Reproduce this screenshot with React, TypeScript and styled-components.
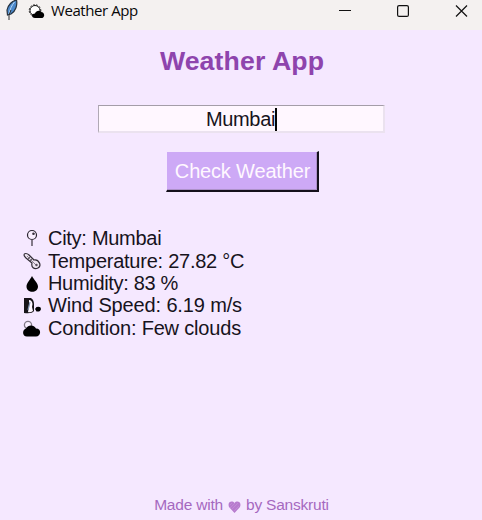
import React from "react";
import styled, { createGlobalStyle } from "styled-components";

const Global = createGlobalStyle`
  * { box-sizing: border-box; }
  body { margin: 0; background: #f5e8ff; overflow: hidden; }
`;

const Window = styled.div`
  width: 482px;
  height: 520px;
  display: flex;
  flex-direction: column;
  background: #f5e8ff;
  color: #17131c;
  font-family: "Liberation Sans", Arial, sans-serif;
  svg { display: block; flex: none; }
`;

const TitleBar = styled.header`
  height: 30px;
  flex: none;
  display: flex;
  align-items: flex-start;
  background: #f4f1f0;
`;

const AppIcon = styled.div`
  width: 28px;
  padding-left: 5px;
`;

const WindowTitle = styled.div`
  width: 311px;
  display: flex;
  gap: 6px;
  font: 15px/21px "Open Sans", "Noto Sans", sans-serif;
  letter-spacing: -0.42px;
  color: #080808;
  white-space: nowrap;
`;

const Controls = styled.div`
  display: flex;
  gap: 46px;
  padding-top: 5px;
`;

const Content = styled.main`
  flex: 1;
  display: flex;
  flex-direction: column;
  align-items: center;
`;

const Heading = styled.h1`
  margin: 15px 0 0;
  padding-left: 2px;
  height: 32px;
  font-size: 26.67px;
  letter-spacing: 0.12px;
  line-height: 32px;
  color: #8e44ad;
`;

const CityInput = styled.div`
  width: 287px;
  height: 28px;
  margin-top: 28px;
  padding: 1px 0 0 2px;
  display: flex;
  justify-content: center;
  align-items: center;
  background: #fff7ff;
  border: solid;
  border-color: #a49da8 #ebe2ef #ebe2ef #b0a9b5;
  border-width: 1px 2px 2px 1px;
  font-size: 20px;
  line-height: 24px;
  letter-spacing: -0.35px;
`;

const Caret = styled.span`
  width: 2px;
  height: 23px;
  background: #050505;
`;

const CheckButton = styled.button`
  width: 153px;
  height: 41px;
  margin: 18px 0 0 3px;
  padding: 0 0 0 1px;
  background: #cda9f6;
  border: solid;
  border-width: 1px 2px 2px 1px;
  border-color: #f5e8ff #15101c #15101c #f5e8ff;
  box-shadow: inset -1px -1px #ad91c9;
  color: #fff8ff;
  font: 20px/24px "Liberation Sans", Arial, sans-serif;
  letter-spacing: -0.17px;
  white-space: nowrap;
`;

const Results = styled.ul`
  align-self: stretch;
  list-style: none;
  margin: 35px 0 0;
  padding: 0 0 0 22px;
`;

const Result = styled.li<{ $tracking: number }>`
  height: 22.4px;
  display: flex;
  align-items: center;
  gap: 6px;
  font-size: 20px;
  line-height: 22px;
  letter-spacing: ${(p) => p.$tracking}px;
  white-space: nowrap;
`;

const Footer = styled.footer`
  margin-top: auto;
  padding-left: 1px;
  height: 24px;
  display: flex;
  gap: 5px;
  font-size: 15.5px;
  line-height: 18px;
  letter-spacing: -0.2px;
  color: #a568c0;
`;

const Feather = () => (
  <svg width="16" height="22" viewBox="0 0 16 22">
    <path d="M11.5 0C7 1 3 5 2 10L2.5 15L6 14C11 11 12.5 5 11.5 0Z" fill="#4a88cb" stroke="#26313d" strokeWidth="1.2" />
    <path d="M9.5 2C7 5 5 9 4 14" fill="none" stroke="#b8d8f5" strokeWidth="1" />
    <path d="M6 10L4 15V20" fill="none" stroke="#292d31" strokeWidth="1" />
  </svg>
);

const SunCloud = () => (
  <svg width="17" height="20" viewBox="0 0 17 20">
    <circle cx="7" cy="10.5" r="5" fill="#fff" stroke="#111" strokeWidth="1" />
    <circle cx="7" cy="10.5" r="5.8" fill="none" stroke="#111" strokeWidth="1" strokeDasharray="1.4 1.7" />
    <path d="M7 18C3 18 3 13.5 7 13.5C8 10.5 12 10 13 12C17 12 17.5 18 13 18Z" fill="#000" />
  </svg>
);

const Pin = () => (
  <svg width="20" height="22" viewBox="0 0 20 22">
    <circle cx="10" cy="8" r="4.5" fill="#f9efff" stroke="#28232d" strokeWidth="1.2" />
    <path d="M10 12.5V19" stroke="#5c5461" strokeWidth="1.5" />
    <circle cx="11.5" cy="6.7" r="1.3" fill="#37303d" />
  </svg>
);

const Thermometer = () => (
  <svg width="20" height="22" viewBox="0 0 20 22">
    <path d="M2 5C2 3 5 3 7 5L12 10C17 9 20 16 16 18C12 20 9 17 10 13L4 8C3 7 2 6 2 5Z" fill="#eee5f1" stroke="#322d36" strokeWidth="1.2" />
    <path d="M5 6L14 15" stroke="#8b8191" strokeWidth="1" />
    <path d="M6 9L8 7M8 11L10 9" stroke="#454048" strokeWidth=".8" />
    <circle cx="14.5" cy="15" r="1.2" fill="#5b5260" />
  </svg>
);

const Drop = () => (
  <svg width="20" height="22" viewBox="0 0 20 22">
    <path d="M10 4C8 8 4.5 11 4.5 14.5C4.5 21.5 16 21.5 16 14.5C16 11 12 8 10 4Z" fill="#000" />
  </svg>
);

const Wind = () => (
  <svg width="20" height="22" viewBox="0 0 20 22">
    <path d="M2 4H9Q12 6 12 10V17Q10 20 2 19Z" fill="#171419" />
    <path d="M7 6Q10 6 10.5 10L10 13L11 17Q8 19 6 18L7 12Z" fill="#fff7ff" />
    <path d="M8 8L6 16" stroke="#7d91ae" strokeWidth="1.2" />
    <path d="M13 15L14.5 13Q19 12 19 15Q18.5 18 14.5 17.5Z" fill="#000" />
  </svg>
);

const Cloud = () => (
  <svg width="20" height="22" viewBox="0 0 20 22">
    <circle cx="6" cy="8" r="3.6" fill="#f9efff" stroke="#807886" strokeWidth="1.3" />
    <path d="M5 19.5C0 19.5 0 12.5 4 11.5C6 7.5 12 7.5 14 11.5C20 11.5 19 19.5 14 19.5Z" fill="#000" />
  </svg>
);

const Heart = () => (
  <svg width="13" height="20" viewBox="0 0 13 20">
    <path d="M6.5 17L1 11C-1 6 4 4 6.5 7C9 4 14 6 12 11Z" fill="#b77bce" />
    <path d="M2 9L4 7M2 12L7 7M4 13L10 7M6 15L11 10" stroke="#c590d8" strokeWidth=".7" />
  </svg>
);

const readings = [
  { icon: <Pin />, text: "City: Mumbai", tracking: -0.28 },
  { icon: <Thermometer />, text: "Temperature: 27.82 °C", tracking: -0.25 },
  { icon: <Drop />, text: "Humidity: 83 %", tracking: -0.32 },
  { icon: <Wind />, text: "Wind Speed: 6.19 m/s", tracking: -0.14 },
  { icon: <Cloud />, text: "Condition: Few clouds", tracking: -0.18 },
];

export default function App() {
  return (
    <Window>
      <Global />
      <TitleBar>
        <AppIcon><Feather /></AppIcon>
        <WindowTitle><SunCloud /><span>Weather App</span></WindowTitle>
        <Controls>
          <svg width="12" height="12"><path d="M0 5.5H12" stroke="#111" /></svg>
          <svg width="12" height="12"><rect x=".6" y=".6" width="10.8" height="10.8" rx="1.5" fill="none" stroke="#111" strokeWidth="1.2" /></svg>
          <svg width="13" height="12"><path d="M1 .5L12 11.5M12 .5L1 11.5" stroke="#111" strokeWidth="1.2" /></svg>
        </Controls>
      </TitleBar>
      <Content>
        <Heading>Weather App</Heading>
        <CityInput><span>Mumbai</span><Caret /></CityInput>
        <CheckButton>Check Weather</CheckButton>
        <Results>
          {readings.map((r) => (
            <Result key={r.text} $tracking={r.tracking}>{r.icon}<span>{r.text}</span></Result>
          ))}
        </Results>
        <Footer><span>Made with</span><Heart /><span>by Sanskruti</span></Footer>
      </Content>
    </Window>
  );
}
